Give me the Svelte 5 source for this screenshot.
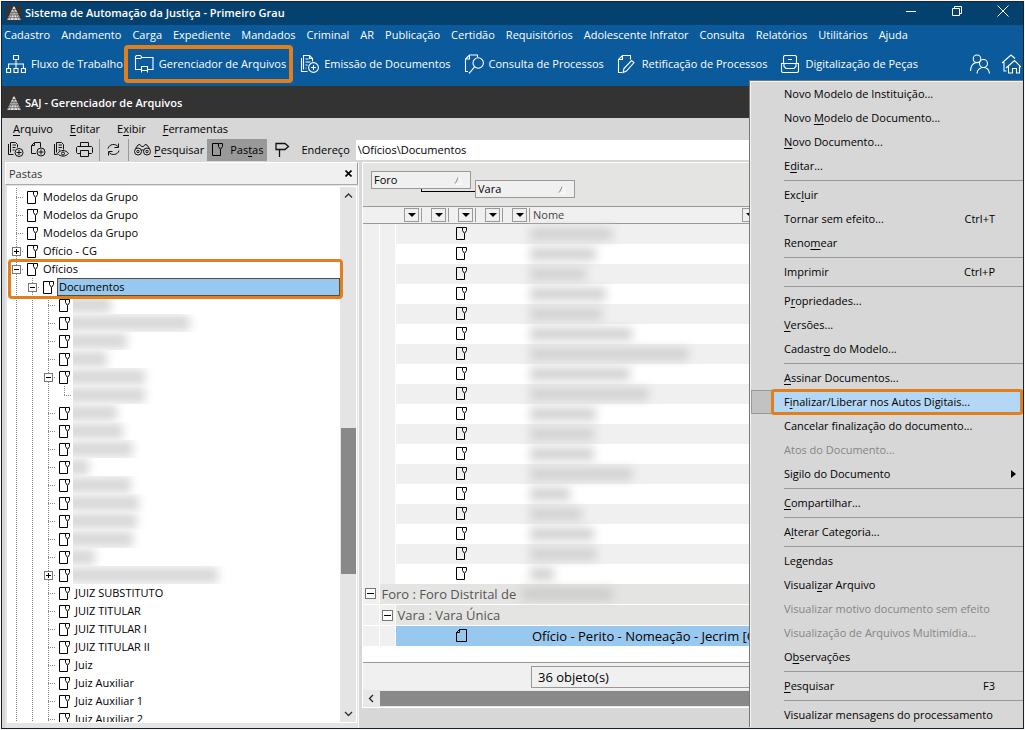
<script lang="ts">
    type TreeRow = {
        level: number;
        label?: string;
        redacted?: number;
        toggle?: 'plus' | 'minus';
        selected?: boolean;
        last?: boolean;
    };

    const mainMenu = [
        'Cadastro', 'Andamento', 'Carga', 'Expediente', 'Mandados', 'Criminal', 'AR', 'Publicação',
        'Certidão', 'Requisitórios', 'Adolescente Infrator', 'Consulta', 'Relatórios', 'Utilitários', 'Ajuda'
    ];

    const mainTools = [
        { icon: 'flow', label: 'Fluxo de Trabalho' },
        { icon: 'folder', label: 'Gerenciador de Arquivos', marked: true },
        { icon: 'docAdd', label: 'Emissão de Documentos' },
        { icon: 'docSearch', label: 'Consulta de Processos' },
        { icon: 'docEdit', label: 'Retificação de Processos' },
        { icon: 'scanner', label: 'Digitalização de Peças' }
    ];

    // an underscore marks the access key
    const fileMenu = ['_Arquivo', '_Editar', 'E_xibir', '_Ferramentas'];

    const tree: TreeRow[] = [
        { level: 0, label: 'Modelos da Grupo' },
        { level: 0, label: 'Modelos da Grupo' },
        { level: 0, label: 'Modelos da Grupo' },
        { level: 0, label: 'Ofício - CG', toggle: 'plus' },
        { level: 0, label: 'Ofícios', toggle: 'minus' },
        { level: 1, label: 'Documentos', toggle: 'minus', selected: true },
        { level: 2, redacted: 38 },
        { level: 2, redacted: 117 },
        { level: 2, redacted: 54 },
        { level: 2, redacted: 34 },
        { level: 2, redacted: 72, toggle: 'minus' },
        { level: 3, redacted: 72, last: true },
        { level: 2, redacted: 44 },
        { level: 2, redacted: 50 },
        { level: 2, redacted: 60 },
        { level: 2, redacted: 16 },
        { level: 2, redacted: 58 },
        { level: 2, redacted: 66 },
        { level: 2, redacted: 64 },
        { level: 2, redacted: 60 },
        { level: 2, redacted: 22 },
        { level: 2, redacted: 145, toggle: 'plus' },
        { level: 2, label: 'JUIZ SUBSTITUTO' },
        { level: 2, label: 'JUIZ TITULAR' },
        { level: 2, label: 'JUIZ TITULAR I' },
        { level: 2, label: 'JUIZ TITULAR II' },
        { level: 2, label: 'Juiz' },
        { level: 2, label: 'Juiz Auxiliar' },
        { level: 2, label: 'Juiz Auxiliar 1' },
        { level: 2, label: 'Juiz Auxiliar 2' }
    ];

    // widths of the hidden names
    const files = [82, 66, 56, 76, 72, 102, 158, 100, 118, 66, 64, 64, 102, 40, 52, 64, 66, 24];

    const contextMenu = [
        [
            { label: 'Novo Modelo de Instituição...' },
            { label: 'Novo _Modelo de Documento...' },
            { label: '_Novo Documento...' },
            { label: 'E_ditar...' }
        ],
        [
            { label: 'Exc_luir' },
            { label: 'Tornar sem efeito...', key: 'Ctrl+T' },
            { label: 'Reno_mear' }
        ],
        [{ label: 'Imprimir', key: 'Ctrl+P' }],
        [
            { label: 'P_ropriedades...' },
            { label: '_Versões...' },
            { label: 'Cadastr_o do Modelo...' }
        ],
        [
            { label: '_Assinar Documentos...' },
            { label: 'F_inalizar/Liberar nos Autos Digitais...', active: true },
            { label: 'Cancelar finalização do documento...' },
            { label: 'Atos do Documento...', disabled: true },
            { label: 'Sigilo do Documento', submenu: true }
        ],
        [{ label: '_Compartilhar...' }],
        [{ label: 'A_lterar Categoria...' }],
        [
            { label: 'Le_gendas' },
            { label: 'Visuali_zar Arquivo' },
            { label: 'Visualizar motivo documento sem efeito', disabled: true },
            { label: 'Visualização de Arquivos Multimídia...', disabled: true },
            { label: 'O_bservações' }
        ],
        [{ label: '_Pesquisar', key: 'F3' }],
        [{ label: 'Visualizar mensagens do processamento' }]
    ] as { label: string; key?: string; active?: boolean; disabled?: boolean; submenu?: boolean }[][];

    let address = '\\Ofícios\\Documentos';
</script>

{#snippet mnemonic(text: string)}
    {@const at = text.indexOf('_')}
    <span>{#if at < 0}{text}{:else}{text.slice(0, at)}<u>{text[at + 1]}</u>{text.slice(at + 2)}{/if}</span>
{/snippet}

{#snippet logo()}
    <svg class="logo" width="16" height="16" viewBox="0 0 16 16" aria-hidden="true">
        <path fill="#333" d="M0 0h16v16H0z" />
        <path fill="#e2e2e2" d="M7.5 1.500h1L15 15H1z" />
        <path fill="none" stroke="#333" stroke-width=".5" d="M3 4.500h10M3 7.200h10M2 9.900h12M1 12.600h14M8 4L4 15M8 4l4 11M8 7v8M6 7L1.500 15M10 7l4.500 8" />
    </svg>
{/snippet}

{#snippet docIcon()}
    <svg class="doc" width="11" height="13" viewBox="0 0 11 13" fill="none" stroke="#000" aria-hidden="true">
        <path d="M6.500.5h-6v12h8v-6" />
        <path d="M6.500.5h4v3l-2 3-2-3z" />
    </svg>
{/snippet}

{#snippet toggleBox(kind: string, size: number)}
    <svg class="toggle" width={size} height={size} viewBox="0 0 {size} {size}" shape-rendering="crispEdges" aria-hidden="true">
        <rect x=".5" y=".5" width={size - 1} height={size - 1} fill="#fff" stroke="#777" />
        <path stroke="#000" d="M2 {size / 2}h{size - 4}" />
        {#if kind === 'plus'}
            <path stroke="#000" d="M{size / 2} 2v{size - 4}" />
        {/if}
    </svg>
{/snippet}

{#snippet toolIcon(name: string)}
    <svg class="tool-icon" width="20" height="20" viewBox="0 0 20 20" fill="none" stroke="currentColor" stroke-width="1.1" aria-hidden="true">
        {#if name === 'flow'}
            <path d="M7.500 1.500h5v4h-5zM.6 14.500h4v4h-4zM8 14.500h4v4H8zM15.400 14.500h4v4h-4zM10 5.500v9M2.600 14.500V10h14.800v4.500" />
        {:else if name === 'folder'}
            <path d="M7 15.500H1.500v-13l1-1h4l1.500 2h11v12H14M1.500 4.500h5l1.500-1M7.500 18.500v-6h6v6M7.500 16.500h6" />
        {:else if name === 'docAdd'}
            <path d="M2.500 4v13.500h6M4.500 15.500v-14h6l3 3v3M10.500 1.500v3h3M6.500 5h3M6.500 8h5M6.500 11h2M6.500 14h1" />
            <circle cx="14.500" cy="13.500" r="4.900" />
            <path d="M12 13.500h5M14.500 11v5" />
        {:else if name === 'docSearch'}
            <path d="M4 17.500H1.500V5l4-4h8v2M5.500 1v4h-4" />
            <circle cx="14.200" cy="9" r="5.200" />
            <path d="M10.500 12.800L5.500 19l-.5-1" />
        {:else if name === 'docEdit'}
            <path d="M5 18.500H1.500V5.500l4-4h8v4M5.500 1.500v4h-4M7 14.500l7.500-8 2.500 2-7.500 8.500-3.500 1.500z" />
        {:else if name === 'scanner'}
            <path d="M3.500 9.500v-7l1-1h11l1 1v7M1.500 17.500v-8h17v8l-1 1h-15zM4 9.500v3L6 14.500h8l2-2v-3M8 5.500h4" />
        {:else if name === 'people'}
            <circle cx="7" cy="4.800" r="3.800" />
            <circle cx="13.500" cy="9.500" r="4" />
            <path d="M.6 17c0-5 2-7.500 5-8.300M7 19.500c.5-4 2.500-6 6.500-6s5.500 2 6 6" />
        {:else if name === 'home'}
            <path d="M1 9l9-8 4 3.500M3 8v9h2.500M5 14l8.500-7.500L20 13M7.500 12.500v6.500h4v-4.500h4V19h3v-6.500" />
        {/if}
    </svg>
{/snippet}

{#snippet sortMark()}
    <svg width="9" height="9" viewBox="0 0 9 9" fill="none" aria-hidden="true">
        <path stroke="#888" d="M1 8L4.500 1" />
        <path stroke="#fff" d="M4.500 1L8 8H1" />
    </svg>
{/snippet}

<div class="window">
    <header class="titlebar">
        {@render logo()}
        <h1>Sistema de Automação da Justiça - Primeiro Grau</h1>
        <div class="window-buttons">
            <button type="button" aria-label="Minimizar">
                <svg width="12" height="12" viewBox="0 0 12 12" fill="none" stroke="#fff"><path d="M1 6.500h10" /></svg>
            </button>
            <button type="button" aria-label="Restaurar">
                <svg width="12" height="12" viewBox="0 0 12 12" fill="none" stroke="#fff"><path d="M1.500 3.500h7v7h-7zM3.500 3V1.500h7v7H9" /></svg>
            </button>
            <button type="button" aria-label="Fechar">
                <svg width="12" height="12" viewBox="0 0 12 12" fill="none" stroke="#fff"><path d="M.5.5l11 11M11.500.5l-11 11" /></svg>
            </button>
        </div>
    </header>

    <nav class="main-menu">
        {#each mainMenu as item}
            <button type="button">{item}</button>
        {/each}
    </nav>

    <div class="main-tools">
        {#each mainTools as tool}
            <button type="button" class:marked={tool.marked}>
                {@render toolIcon(tool.icon)}
                {tool.label}
            </button>
        {/each}
        <div class="shortcuts">
            <button type="button" aria-label="Usuários">{@render toolIcon('people')}</button>
            <button type="button" aria-label="Início">{@render toolIcon('home')}</button>
        </div>
    </div>

    <div class="subtitle">
        {@render logo()}
        <h2>SAJ - Gerenciador de Arquivos</h2>
    </div>

    <nav class="file-menu">
        {#each fileMenu as item}
            <button type="button">{@render mnemonic(item)}</button>
        {/each}
    </nav>

    <div class="file-tools">
        <button type="button" class="small" aria-label="Novo modelo">
            <svg width="17" height="17" viewBox="0 0 17 17" fill="none" stroke="#111">
                <path d="M1.500 3v10.500h5M3.500 11.500V1.500h5l2 2v3M5.500 4H9M5.500 6.500h3M5.500 9h2" /><circle cx="12" cy="11.500" r="4" /><path d="M9.500 11.500h5M12 9v5" />
            </svg>
        </button>
        <button type="button" class="small" aria-label="Novo documento">
            <svg width="17" height="17" viewBox="0 0 17 17" fill="none" stroke="#111">
                <path d="M6 12.500H1.500V4.500l3-3h6v5M4.500 1.500v3h-3" /><circle cx="11" cy="11" r="4" /><path d="M8.500 11h5M11 8.500v5" />
            </svg>
        </button>
        <button type="button" class="small" aria-label="Visualizar">
            <svg width="17" height="17" viewBox="0 0 17 17" fill="none" stroke="#111">
                <path d="M1.500 3v10.500h3M3.500 11.500V1.500h5l2 2v5M5.500 4H9M5.500 6.500H9M5.500 9H7M4.500 12.500c3-4 8-4 11 0-3 3.500-8 3.500-11 0z" /><circle cx="10" cy="12.500" r="1.500" />
            </svg>
        </button>
        <button type="button" class="small" aria-label="Imprimir">
            <svg width="17" height="17" viewBox="0 0 17 17" fill="none" stroke="#111">
                <path d="M4.500 5.500v-4h8v4M4 12.500H1.500l-1-1v-5l1-1h14l1 1v5l-1 1H13M4.500 9.500h8v6h-8z" />
            </svg>
        </button>
        <span class="divider"></span>
        <button type="button" class="small" aria-label="Atualizar">
            <svg width="17" height="17" viewBox="0 0 17 17" fill="none" stroke="#111">
                <path d="M3 7.500c1-4.500 7.500-5.500 10.500-1.500M13.500 2.500V6.500h-4M14 9.500c-1 4.500-7.500 5.500-10.500 1.500M3.500 14.500V10.500h4" />
            </svg>
        </button>
        <span class="divider"></span>
        <button type="button" class="text-tool">
            <svg width="17" height="13" viewBox="0 0 17 13" fill="none" stroke="#111">
                <circle cx="4" cy="8.500" r="3.500" /><circle cx="13" cy="8.500" r="3.500" /><circle cx="4" cy="8.500" r="1.200" /><circle cx="13" cy="8.500" r="1.200" />
                <path d="M7 7.500c1-.8 2-.8 3 0M1.500 5.500L4 2l2-.5 1.500 2h2L11 1.500l2 .5 2.500 3.500" />
            </svg>
            {@render mnemonic('_Pesquisar')}
        </button>
        <button type="button" class="text-tool pressed">
            {@render docIcon()}
            {@render mnemonic('Pas_tas')}
        </button>
        <button type="button" class="small pin" aria-label="Marcar">
            <svg width="15" height="15" viewBox="0 0 15 15" fill="none" stroke="#111" stroke-width="1.300">
                <path d="M1 1.500h9l3.500 3-3.500 3H1zM4.500 7.500V15" />
            </svg>
        </button>
        <label for="address">Endereço</label>
        <input id="address" type="text" bind:value={address} />
    </div>

    <main class="panes">
        <section class="folders">
            <div class="pane-title">
                <h3>Pastas</h3>
                <button type="button" aria-label="Fechar pastas">
                    <svg width="7" height="7" viewBox="0 0 7 7" fill="none" stroke="#000" stroke-width="1.600"><path d="M.5.5l6 6M6.500.5l-6 6" /></svg>
                </button>
            </div>
            <div class="tree-box">
                <ul class="tree">
                    {#each tree as row}
                        <li>
                            {#each Array(row.level) as _}
                                <span class="guide"></span>
                            {/each}
                            <span class="guide branch" class:last={row.last}>
                                {#if row.toggle}{@render toggleBox(row.toggle, 9)}{/if}
                            </span>
                            {#if !row.last}{@render docIcon()}{/if}
                            {#if row.label}
                                <span class="label" class:selected={row.selected}>{row.label}</span>
                            {:else}
                                <span class="veil"><span class="redacted" style:width="{row.redacted}px"></span></span>
                            {/if}
                        </li>
                    {/each}
                </ul>
                <div class="scroll-v">
                    <svg width="9" height="17" viewBox="0 0 9 17" fill="none" stroke="#333" stroke-width="1.300"><path d="M1 10.500L4.500 7 8 10.500" /></svg>
                    <span class="above"></span>
                    <span class="thumb"></span>
                    <span class="below"></span>
                    <svg width="9" height="17" viewBox="0 0 9 17" fill="none" stroke="#333" stroke-width="1.300"><path d="M1 7l3.500 3.500L8 7" /></svg>
                </div>
                <div class="marker"></div>
            </div>
        </section>

        <section class="files">
            <div class="grouping">
                <button type="button">Foro {@render sortMark()}</button>
                <span class="joint"></span>
                <button type="button" class="nested">Vara {@render sortMark()}</button>
            </div>
            <div class="table-box">
                <table>
                    <colgroup>
                        <col class="indent" /><col class="indent" />
                        <col class="flag" /><col class="flag" /><col class="flag" /><col class="flag" /><col class="flag" />
                        <col class="name" /><col />
                    </colgroup>
                    <thead>
                        <tr>
                            {#each [3, 1, 1, 1, 1] as span}
                                <th colspan={span}>
                                    <div class="head"><button type="button" class="drop" aria-label="Filtrar"></button></div>
                                </th>
                            {/each}
                            <th><div class="head">Nome <button type="button" class="drop" aria-label="Filtrar por nome"></button></div></th>
                            <th></th>
                        </tr>
                    </thead>
                    <tbody>
                        {#each files as width}
                            <tr class="file">
                                <td class="gutter"></td>
                                <td class="gutter"></td>
                                <td></td>
                                <td></td>
                                <td class="kind">{@render docIcon()}</td>
                                <td></td>
                                <td></td>
                                <td><span class="redacted" style:width="{width}px"></span></td>
                                <td></td>
                            </tr>
                        {/each}
                        <tr class="group">
                            <td class="gutter">{@render toggleBox('minus', 11)}</td>
                            <td colspan="8"><div class="group-name">Foro : Foro Distrital de <span class="redacted wide"></span></div></td>
                        </tr>
                        <tr class="group">
                            <td class="gutter"></td>
                            <td class="gutter">{@render toggleBox('minus', 11)}</td>
                            <td colspan="7">Vara : Vara Única</td>
                        </tr>
                        <tr class="current">
                            <td class="gutter"></td>
                            <td class="gutter"></td>
                            <td></td>
                            <td></td>
                            <td class="kind">
                                <svg class="doc" width="11" height="13" viewBox="0 0 11 13" fill="none" stroke="#000"><path d="M3.500.5h7v12H.5v-9zM3.500.5v3h-3" /></svg>
                            </td>
                            <td></td>
                            <td></td>
                            <td colspan="2">Ofício - Perito - Nomeação - Jecrim [Ofício]</td>
                        </tr>
                    </tbody>
                </table>
            </div>
            <div class="summary"><output>36 objeto(s)</output></div>
            <div class="scroll-h">
                <svg width="17" height="9" viewBox="0 0 17 9" fill="none" stroke="#222" stroke-width="1.300"><path d="M10 1L6.500 4.500 10 8" /></svg>
                <span class="thumb"></span>
            </div>
        </section>
    </main>

    <div class="context-menu" role="menu">
        {#each contextMenu as group}
            <div class="menu-group" role="group">
                {#each group as item}
                    <button type="button" role="menuitem" disabled={item.disabled} class:active={item.active}>
                        {@render mnemonic(item.label)}
                        {#if item.key}<kbd>{item.key}</kbd>{/if}
                        {#if item.submenu}<i class="arrow"></i>{/if}
                    </button>
                {/each}
            </div>
        {/each}
    </div>
</div>

<style>
    :global(body) {
        background: #f4f8f8;
    }

    .window,
    .window * {
        box-sizing: border-box;
    }

    .window {
        position: relative;
        display: flex;
        flex-direction: column;
        height: calc(100vh - 2px);
        margin: 1px;
        border: 1px solid #1c2126;
        overflow: hidden;
        background: #d7d7d7;
        color: #000;
        font: 11px/18px 'Open Sans', 'Noto Sans', sans-serif;
    }

    h1,
    h2,
    h3 {
        margin: 0;
        font: inherit;
    }

    button {
        display: flex;
        align-items: center;
        margin: 0;
        padding: 0;
        border: 0;
        background: none;
        color: inherit;
        font: inherit;
        white-space: nowrap;
    }

    svg {
        flex: none;
        display: block;
    }

    u {
        text-underline-offset: 2px;
    }

    .titlebar {
        flex: none;
        display: flex;
        align-items: center;
        gap: 3px;
        height: 23px;
        padding: 0 14px 1px 4px;
        background: #05416f;
        color: #fff;
    }

    .titlebar h1,
    .subtitle h2 {
        font-weight: 600;
        white-space: nowrap;
    }

    .window-buttons {
        display: flex;
        gap: 34px;
        margin-left: auto;
        padding-bottom: 5px;
    }

    .main-menu {
        flex: none;
        display: flex;
        gap: 11px;
        height: 20px;
        padding-left: 2px;
        background: #0b5a9b;
        color: #fff;
    }

    .main-tools {
        flex: none;
        display: flex;
        align-items: flex-start;
        gap: 13px;
        height: 41px;
        padding-left: 4px;
        background: #0b5a9b;
        color: #fff;
    }

    .main-tools button {
        gap: 5px;
        height: 38px;
    }

    .main-tools .marked {
        margin: 0 -7px 0 -12px;
        padding: 0 3px 0 6px;
        border: 4px solid #e27f1d;
        border-radius: 4px;
    }

    .shortcuts {
        display: flex;
        gap: 11px;
        margin-left: auto;
        padding-right: 2px;
    }

    .subtitle {
        flex: none;
        display: flex;
        align-items: center;
        gap: 3px;
        height: 32px;
        padding: 2px 0 0 4px;
        background: #333;
        color: #fff;
    }

    .file-menu {
        flex: none;
        display: flex;
        gap: 17px;
        height: 21px;
        padding-left: 11px;
    }

    .file-tools {
        flex: none;
        display: flex;
        align-items: center;
        height: 22px;
        padding: 0 0 1px 5px;
    }

    .small {
        margin-right: 6px;
    }

    .divider {
        width: 1px;
        height: 22px;
        margin-right: 5px;
        background: #999;
    }

    .text-tool {
        gap: 3px;
        height: 22px;
        padding-right: 3px;
    }

    .pressed {
        gap: 7px;
        margin-right: 8px;
        padding: 0 4px 0 5px;
        background: #999;
    }

    .file-tools label {
        margin: 0 6px 0 5px;
    }

    .file-tools input {
        flex: 1;
        min-width: 0;
        height: 20px;
        padding: 0 2px;
        border: 0;
        background: #fff;
        color: #000;
        font: inherit;
    }

    .panes {
        flex: 1;
        display: flex;
        gap: 3px;
        min-height: 0;
        padding: 1px 0 0 3px;
    }

    .folders {
        flex: none;
        display: flex;
        flex-direction: column;
        width: 354px;
        padding-bottom: 5px;
        background: #e4e4e4;
        border-right: 1px solid #f8f8f8;
    }

    .pane-title {
        flex: none;
        display: flex;
        align-items: center;
        justify-content: space-between;
        height: 23px;
        padding: 0 5px 0 3px;
        border: 1px solid #fff;
        border-right-color: #999;
        border-bottom-color: #aaa;
        background: #f0f0f0;
        color: #333;
    }

    .tree-box {
        flex: 1;
        position: relative;
        display: flex;
        min-height: 0;
        margin: 1px 1px 0 2px;
        border: 1px solid #fff;
        background: #fff;
    }

    .tree {
        flex: 1;
        margin: 0;
        padding: 1px 0 0;
        overflow: hidden;
        list-style: none;
    }

    .tree li {
        display: flex;
        align-items: center;
        height: 18px;
    }

    .guide {
        flex: none;
        display: flex;
        align-items: center;
        justify-content: center;
        width: 16px;
        height: 18px;
        padding-left: 1px;
        background: repeating-linear-gradient(#888 0 1px, transparent 1px 2px) 8px 0 / 1px 18px no-repeat;
    }

    .branch {
        background:
            repeating-linear-gradient(#888 0 1px, transparent 1px 2px) 8px 0 / 1px 18px no-repeat,
            repeating-linear-gradient(90deg, #888 0 1px, transparent 1px 2px) 8px 9px / 8px 1px no-repeat;
    }

    .branch.last {
        background-size: 1px 9px, 8px 1px;
    }

    .tree .doc {
        margin: 0 5px 0 3px;
    }

    .label {
        white-space: nowrap;
    }

    .selected {
        flex: 1;
        height: 18px;
        margin-left: -2px;
        padding-left: 1px;
        border: 1px solid #5d4a3c;
        background: #99c8ee;
        line-height: 16px;
    }

    .veil {
        height: 18px;
        margin-left: -2px;
        padding: 1px 12px 1px 0;
        overflow: hidden;
    }

    .last + .veil {
        margin-left: 1px;
    }

    .redacted {
        display: block;
        flex: none;
        height: 12px;
        background: #d0d0d0;
        filter: blur(5px);
    }

    .veil .redacted {
        box-sizing: content-box;
        height: 16px;
        margin-left: -8px;
        padding-left: 8px;
        background: #d8d8d8;
    }

    .scroll-v {
        flex: none;
        display: flex;
        flex-direction: column;
        align-items: center;
        width: 16px;
        background: #e4e4e4;
    }

    .scroll-v .thumb {
        flex: 145;
        width: 15px;
    }

    .above {
        flex: 224;
    }

    .below {
        flex: 131;
    }

    .thumb {
        background: #898989;
    }

    .marker {
        position: absolute;
        top: 72px;
        left: 0;
        right: 13px;
        height: 40px;
        border: 3px solid #e27f1d;
        border-radius: 4px;
    }

    .files {
        flex: 1;
        display: flex;
        flex-direction: column;
        min-width: 0;
        margin-bottom: 20px;
        border: 1px solid #fff;
        background: #fff;
    }

    .grouping {
        flex: none;
        display: flex;
        height: 43px;
        padding: 8px;
        background: #e4e4e2;
    }

    .grouping button {
        justify-content: space-between;
        width: 100px;
        height: 18px;
        padding: 0 7px 0 2px;
        border: 1px solid #999;
        background: #f0f0f0;
    }

    .grouping .nested {
        margin-top: 9px;
    }

    .joint {
        width: 54px;
        height: 3px;
        margin: 18px 0 0 -50px;
        border: solid #000;
        border-width: 0 0 1px 1px;
    }

    .table-box {
        flex: 1;
        min-height: 0;
        overflow: hidden;
    }

    table {
        width: 100%;
        border-collapse: collapse;
        table-layout: fixed;
        font-size: 13px;
    }

    .indent {
        width: 16px;
    }

    .flag {
        width: 27px;
    }

    .name {
        width: 227px;
    }

    th {
        height: 17px;
        padding: 0;
        border-top: 1px solid #999;
        border-bottom: 1px solid #999;
        background: #f0f0f0;
        color: #444;
        font-size: 11px;
        font-weight: 400;
    }

    .head {
        display: flex;
        align-items: center;
        justify-content: flex-end;
        gap: 4px;
        height: 14px;
        padding-right: 2px;
        border-right: 1px solid #999;
    }

    th:nth-child(6) .head {
        justify-content: space-between;
        padding: 0 0 0 3px;
        border: 0;
    }

    .drop {
        justify-content: center;
        width: 15px;
        height: 14px;
        border: 1px solid #999;
    }

    .drop::before {
        border: solid transparent;
        border-width: 4px 4px 0;
        border-top-color: #000;
        content: '';
    }

    td {
        height: 20px;
        padding: 0;
        line-height: 18px;
        white-space: nowrap;
    }

    .file:nth-child(odd) {
        background: #f0f0f0;
    }

    td.gutter {
        border-right: 1px solid #fff;
        background: #f0f0f0;
    }

    .gutter .toggle {
        margin: 0 auto;
    }

    .kind .doc {
        margin-left: 7px;
    }

    .group td {
        height: 21px;
        padding-left: 2px;
        border-bottom: 1px solid #fff;
        background: #e4e4e2;
        color: #555;
    }

    .group td.gutter {
        padding: 0;
        background: #f0f0f0;
    }

    .group-name {
        display: flex;
        align-items: center;
        gap: 6px;
    }

    .redacted.wide {
        width: 90px;
        background: #ccccca;
    }

    .current {
        background: #99c8ee;
    }

    .current td:last-child {
        padding-left: 2px;
    }

    .summary {
        flex: none;
        height: 28px;
        padding: 3px 0 2px 168px;
        border-top: 1px solid #999;
        background: #f0f0f0;
        font-size: 13px;
    }

    .summary output {
        display: block;
        height: 22px;
        padding-left: 6px;
        border: 1px solid #999;
        line-height: 20px;
    }

    .scroll-h {
        flex: none;
        display: flex;
        align-items: center;
        height: 17px;
        background: #e8e8e8;
    }

    .scroll-h .thumb {
        flex: 1;
        height: 15px;
    }

    .context-menu {
        position: absolute;
        top: 78px;
        right: 0;
        width: 274px;
        padding: 1px 0 0 1px;
        border: solid #777;
        border-width: 1px 0 0 1px;
        background: #d7d7d7;
        box-shadow: inset 1px 1px #f4f4f4;
    }

    .menu-group + .menu-group {
        position: relative;
        padding-top: 5px;
    }

    .menu-group + .menu-group::before {
        position: absolute;
        top: 2px;
        left: 33px;
        right: 0;
        border-top: 1px solid #999;
        content: '';
    }

    .context-menu button {
        justify-content: space-between;
        width: 100%;
        height: 24px;
        padding: 0 28px 0 33px;
    }

    .context-menu button:disabled {
        color: #858585;
    }

    .context-menu .active {
        position: relative;
        background: linear-gradient(90deg, #c2c2c2 22px, #b3d7f5 22px);
        outline: 1px solid #999;
        outline-offset: -1px;
    }

    .active::after {
        position: absolute;
        inset: -1px 0 -1px 20px;
        border: 3px solid #e27f1d;
        border-radius: 3px;
        content: '';
    }

    kbd {
        font: inherit;
    }

    .arrow {
        margin-right: -21px;
        border: solid transparent;
        border-width: 4px 0 4px 5px;
        border-left-color: #000;
    }
</style>
